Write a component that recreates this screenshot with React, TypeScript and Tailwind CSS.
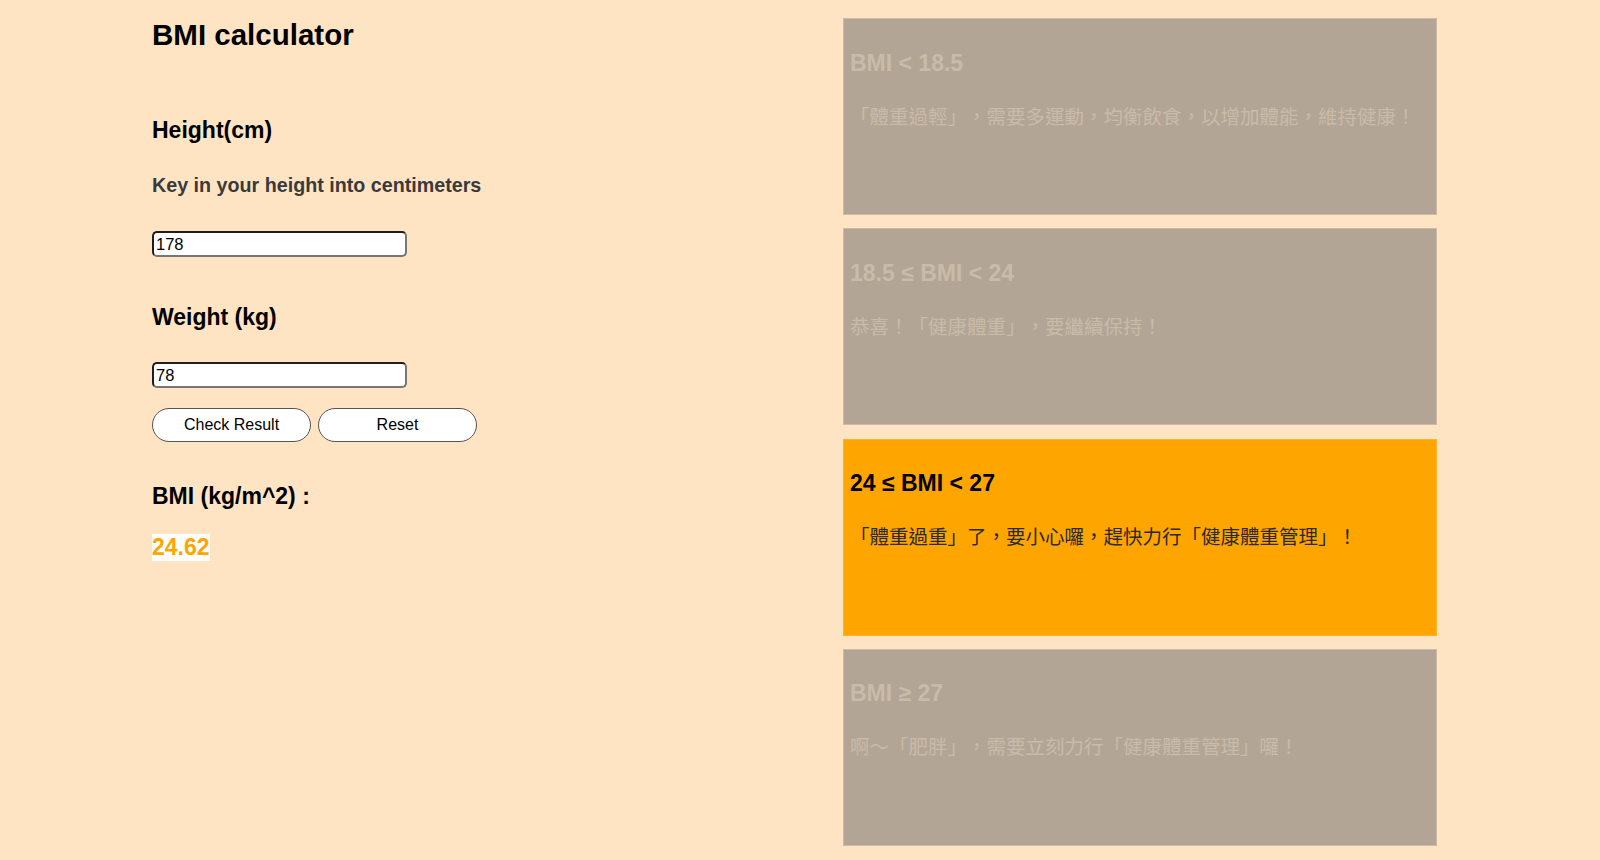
import React from "react";

interface RangeCard {
  title: string;
  message: string;
  active: boolean;
}

const cards: RangeCard[] = [
  {
    title: "BMI < 18.5",
    message: "「體重過輕」，需要多運動，均衡飲食，以增加體能，維持健康！",
    active: false,
  },
  {
    title: "18.5 ≤ BMI < 24",
    message: "恭喜！「健康體重」，要繼續保持！",
    active: false,
  },
  {
    title: "24 ≤ BMI < 27",
    message: "「體重過重」了，要小心囉，趕快力行「健康體重管理」！",
    active: true,
  },
  {
    title: "BMI ≥ 27",
    message: "啊～「肥胖」，需要立刻力行「健康體重管理」囉！",
    active: false,
  },
];

const FieldInput: React.FC<{ value: string }> = ({ value }) => (
  <input
    type="text"
    defaultValue={value}
    className="block h-[26px] w-[255px] rounded-[5px] border-2 border-t-[#1f1f1f] border-l-[#1f1f1f] border-r-[#767676] border-b-[#767676] bg-white px-[2px] text-[16.5px] text-black outline-none font-['Liberation_Sans',Arial,sans-serif]"
  />
);

export default function App() {
  return (
    <div className="flex min-h-screen bg-[#ffe4c4] pl-[152px] pt-[18px] font-['Liberation_Sans',Arial,sans-serif]">
      {/* Calculator form */}
      <div className="flex w-[691px] flex-col items-start">
        <h1 className="text-[29.5px] leading-[34px] font-bold text-black">BMI calculator</h1>

        <h2 className="mt-[65px] text-[23px] leading-[26px] font-bold text-black">Height(cm)</h2>
        <p className="mt-[30.5px] text-[19.7px] leading-[23px] font-bold text-[#3a3a3a]">
          Key in your height into centimeters
        </p>
        <div className="mt-[34.5px]">
          <FieldInput value="178" />
        </div>

        <h2 className="mt-[47px] text-[23px] leading-[26px] font-bold text-black">Weight (kg)</h2>
        <div className="mt-[32px]">
          <FieldInput value="78" />
        </div>

        <div className="mt-[20px] flex gap-[7px]">
          <button className="h-[34px] w-[159px] rounded-full border-[1.5px] border-[#555] bg-white text-[16px] text-black">
            Check Result
          </button>
          <button className="h-[34px] w-[159px] rounded-full border-[1.5px] border-[#555] bg-white text-[16px] text-black">
            Reset
          </button>
        </div>

        <h2 className="mt-[41px] text-[23px] leading-[26px] font-bold text-black">BMI (kg/m^2) :</h2>
        <span className="mt-[25px] inline-block bg-white text-[23px] leading-[27px] font-bold text-[#ffa500]">
          24.62
        </span>
      </div>

      {/* BMI ranges */}
      <div className="flex w-[594px] flex-col gap-[13.33px]">
        {cards.map((card) => (
          <div
            key={card.title}
            className={`h-[197px] border px-[6px] pt-[30.5px] ${
              card.active
                ? "border-[#ffb428] bg-[#ffa500]"
                : "border-[#cdbba5] bg-[#b2a595]"
            }`}
          >
            <h3
              className={`text-[23px] leading-[27px] font-bold ${
                card.active ? "text-black" : "text-[#c9bba9]"
              }`}
            >
              {card.title}
            </h3>
            <p
              className={`mt-[27px] text-[19.5px] leading-[24px] [text-spacing-trim:space-all] font-['Noto_Sans_CJK_TC','Liberation_Sans',sans-serif] ${
                card.active ? "text-[#2a2a2a]" : "text-[#c9bba9]"
              }`}
            >
              {card.message}
            </p>
          </div>
        ))}
      </div>
    </div>
  );
}
